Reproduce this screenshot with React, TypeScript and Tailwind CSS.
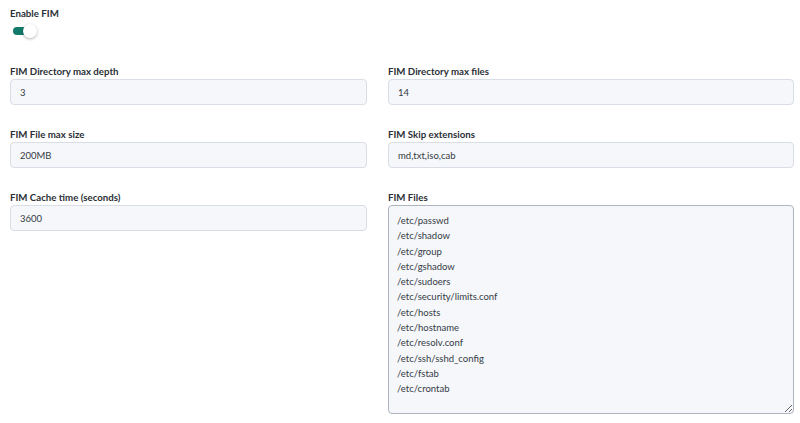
import { useState } from 'react'

const FIM_FILES = [
  '/etc/passwd',
  '/etc/shadow',
  '/etc/group',
  '/etc/gshadow',
  '/etc/sudoers',
  '/etc/security/limits.conf',
  '/etc/hosts',
  '/etc/hostname',
  '/etc/resolv.conf',
  '/etc/ssh/sshd_config',
  '/etc/fstab',
  '/etc/crontab',
]

function Field({ label, value }: { label: string; value: string }) {
  return (
    <div className="flex flex-col">
      <label className="text-[9.7px] font-bold text-[#2b2f36] leading-[12px] mb-[2px]">{label}</label>
      <input
        type="text"
        defaultValue={value}
        className="h-[26px] w-full rounded-[4px] border border-[#d9dde5] bg-[#f5f7fa] px-[9px] text-[9.5px] text-[#343a44] outline-none"
      />
    </div>
  )
}

export default function App() {
  const [enabled, setEnabled] = useState(true)

  return (
    <div
      className="min-h-[423px] bg-white pl-[10px] pt-[7px]"
      style={{ fontFamily: 'Lato, "Open Sans", sans-serif' }}
    >
      {/* Toggle */}
      <div className="flex flex-col">
        <span className="text-[9.7px] font-bold text-[#2b2f36] leading-[12px]">Enable FIM</span>
        <button
          type="button"
          onClick={() => setEnabled(!enabled)}
          className="relative mt-[5px] ml-[3px] h-[14px] w-[25px]"
          aria-label="Enable FIM"
        >
          <span
            className={`absolute left-0 top-[3px] h-[8px] w-[16px] rounded-full ${
              enabled ? 'bg-[#127a6a]' : 'bg-gray-300'
            }`}
          />
          <span
            className={`absolute top-0 h-[14px] w-[14px] rounded-full bg-white shadow-[0_1px_3px_rgba(0,0,0,0.3)] ${
              enabled ? 'left-[10px]' : 'left-0'
            }`}
          />
        </button>
      </div>

      <div className="mt-[27px] grid grid-cols-[357px_406px] gap-x-[21px] gap-y-[23px]">
        <Field label="FIM Directory max depth" value="3" />
        <Field label="FIM Directory max files" value="14" />
        <Field label="FIM File max size" value="200MB" />
        <Field label="FIM Skip extensions" value="md,txt,iso,cab" />
        <Field label="FIM Cache time (seconds)" value="3600" />
        <div className="flex flex-col">
          <label className="text-[9.7px] font-bold text-[#2b2f36] leading-[12px] mb-[2px]">FIM Files</label>
          <textarea
            defaultValue={FIM_FILES.join('\n')}
            className="h-[209px] w-full resize rounded-[4px] border border-[#aeb4c0] bg-[#f5f7fa] px-[8px] pt-[7px] text-[9.5px] leading-[15.3px] text-[#343a44] outline-none"
          />
        </div>
      </div>
    </div>
  )
}
